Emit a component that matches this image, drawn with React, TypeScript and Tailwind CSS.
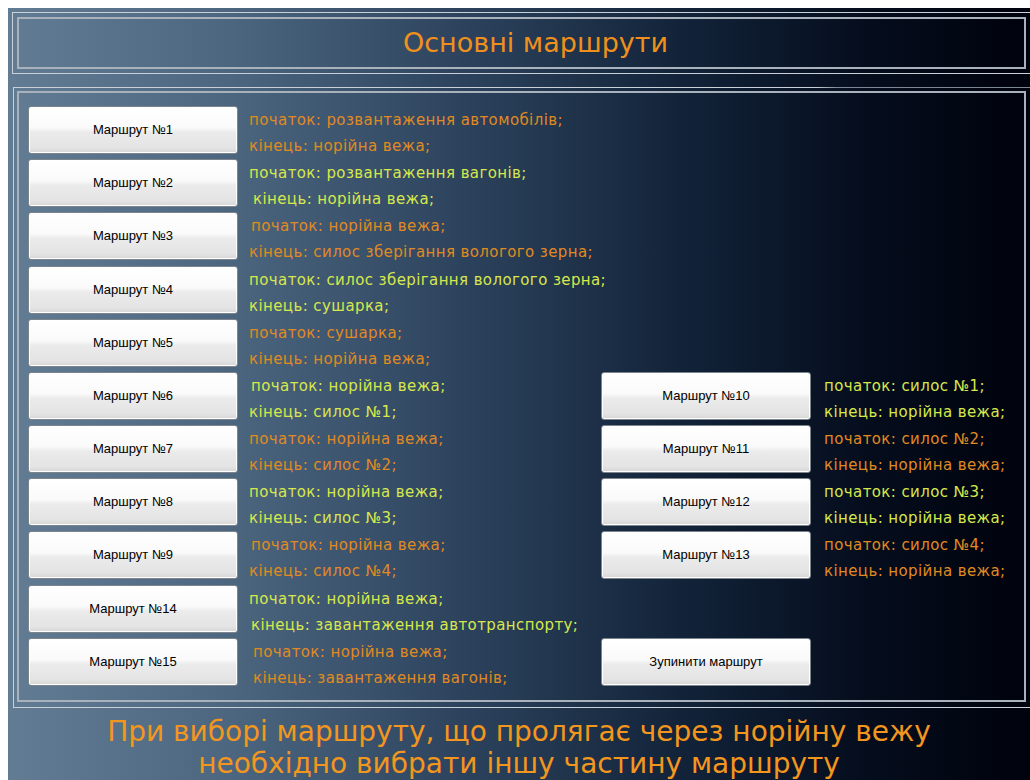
import React from "react";

type Route = {
  label: string;
  from: string;
  to: string;
  tone: "orange" | "yellow";
  shift?: [number, number];
};

const leftRoutes: Route[] = [
  { label: "Маршрут №1", from: "початок: розвантаження автомобілів;", to: "кінець: норійна вежа;", tone: "orange" },
  { label: "Маршрут №2", from: "початок: розвантаження вагонів;", to: "кінець: норійна вежа;", tone: "yellow", shift: [0, 4] },
  { label: "Маршрут №3", from: "початок: норійна вежа;", to: "кінець: силос зберігання вологого зерна;", tone: "orange", shift: [2, 0] },
  { label: "Маршрут №4", from: "початок: силос зберігання вологого зерна;", to: "кінець: сушарка;", tone: "yellow" },
  { label: "Маршрут №5", from: "початок: сушарка;", to: "кінець: норійна вежа;", tone: "orange" },
  { label: "Маршрут №6", from: "початок: норійна вежа;", to: "кінець: силос №1;", tone: "yellow", shift: [2, 0] },
  { label: "Маршрут №7", from: "початок: норійна вежа;", to: "кінець: силос №2;", tone: "orange" },
  { label: "Маршрут №8", from: "початок: норійна вежа;", to: "кінець: силос №3;", tone: "yellow" },
  { label: "Маршрут №9", from: "початок: норійна вежа;", to: "кінець: силос №4;", tone: "orange", shift: [2, 0] },
  { label: "Маршрут №14", from: "початок: норійна вежа;", to: "кінець: завантаження автотранспорту;", tone: "yellow", shift: [0, 2] },
  { label: "Маршрут №15", from: "початок: норійна вежа;", to: "кінець: завантаження вагонів;", tone: "orange", shift: [4, 4] },
];

// right column, keyed by the row index of the left column
const rightRoutes: Record<number, Route> = {
  5: { label: "Маршрут №10", from: "початок: силос №1;", to: "кінець: норійна вежа;", tone: "yellow" },
  6: { label: "Маршрут №11", from: "початок: силос №2;", to: "кінець: норійна вежа;", tone: "orange" },
  7: { label: "Маршрут №12", from: "початок: силос №3;", to: "кінець: норійна вежа;", tone: "yellow" },
  8: { label: "Маршрут №13", from: "початок: силос №4;", to: "кінець: норійна вежа;", tone: "orange" },
};

function RouteButton({ label }: { label: string }) {
  return (
    <button className="h-[48px] w-[210px] shrink-0 rounded-[3px] border border-[#7c848c] bg-[linear-gradient(to_bottom,#ffffff_0%,#fafafa_45%,#ebebeb_55%,#e4e4e4_88%,#d6d6d6_100%)] text-[13px] text-black shadow-[inset_0_0_0_1px_#ffffff] [font-family:'Liberation_Sans',Arial,sans-serif]">
      {label}
    </button>
  );
}

function RouteText({ route }: { route: Route }) {
  const color = route.tone === "orange" ? "text-[#e08a22]" : "text-[#d6e84c]";
  const [a, b] = route.shift ?? [0, 0];
  return (
    <div className={`mt-px text-[15px] leading-[26px] tracking-[0.4px] whitespace-nowrap ${color} [font-family:'DejaVu_Sans',sans-serif]`}>
      <div style={{ paddingLeft: a }}>{route.from}</div>
      <div style={{ paddingLeft: b }}>{route.to}</div>
    </div>
  );
}

export default function App() {
  return (
    <div className="h-[780px] w-[1030px] overflow-hidden bg-white pl-[8px] pt-[8px]">
      <div className="flex h-[772px] w-[1022px] flex-col bg-[linear-gradient(to_right,#627c94_0%,#4c6680_22%,#2c425c_45%,#122339_66%,#050d1d_84%,#00020c_100%)]">
        {/* header */}
        <div className="ml-[4px] mt-[4px] h-[62px] border-y border-l border-[#c9d0d8] pl-[4px] pt-[4px]">
          <div className="flex h-[52px] w-[1009px] items-center justify-center border-2 border-[#a9b2bc] pl-[28px] text-[27px] text-[#f0901c] [font-family:'DejaVu_Sans',sans-serif]">
            Основні маршрути
          </div>
        </div>

        {/* routes panel */}
        <div className="ml-[5px] mt-[13px] h-[622px] border-b border-l border-[#c9d0d8]">
          <div className="h-px w-full bg-[linear-gradient(to_right,#c9d0d8_0%,#c9d0d8_79%,#7d8794_81%,#7d8794_100%)]" />
          <div className="pl-[3px] pt-[3px]">
            <div className="h-[611px] w-[1009px] border-2 border-[#a9b2bc] pl-[9px] pt-[13px]">
              <div className="flex flex-col">
                {leftRoutes.map((route, i) => (
                  <div key={route.label} className={`flex h-[53px] ${i === 3 || i === 9 ? "mt-px" : ""}`}>
                    <div className="flex w-[573px] gap-[11px]">
                      <RouteButton label={route.label} />
                      <RouteText route={route} />
                    </div>
                    {rightRoutes[i] && (
                      <div className="flex gap-[13px]">
                        <RouteButton label={rightRoutes[i].label} />
                        <RouteText route={rightRoutes[i]} />
                      </div>
                    )}
                    {i === leftRoutes.length - 1 && <RouteButton label="Зупинити маршрут" />}
                  </div>
                ))}
              </div>
            </div>
          </div>
        </div>

        {/* footer note */}
        <div className="mt-[8px] text-center text-[28px] leading-[32px] text-[#f2961e] [font-family:'DejaVu_Sans',sans-serif]">
          <div>При виборі маршруту, що пролягає через норійну вежу</div>
          <div>необхідно вибрати іншу частину маршруту</div>
        </div>
      </div>
    </div>
  );
}
